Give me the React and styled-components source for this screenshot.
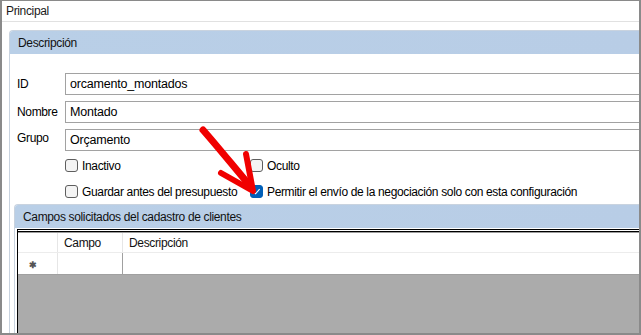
import React from "react";
import styled, { createGlobalStyle } from "styled-components";

const GlobalStyle = createGlobalStyle`
  html, body {
    margin: 0;
    padding: 0;
    background: #ffffff;
  }
  body {
    font-family: "Liberation Sans", Arial, sans-serif;
    font-size: 12px;
    letter-spacing: -0.35px;
    color: #000;
  }
`;

// Janela principal
const Window = styled.div`
  position: relative;
  width: 641px;
  height: 335px;
  box-sizing: border-box;
  border: 2px solid #8a8a8a;
  border-top-width: 1px;
  overflow: hidden;
  display: flex;
  flex-direction: column;
  background: #fff;
`;

const TitleBar = styled.div`
  height: 20px;
  line-height: 21px;
  padding-left: 4px;
  border-bottom: 1px solid #e1e1e1;
  color: #1a1a1a;
  flex-shrink: 0;
`;

const Content = styled.div`
  flex: 1;
  display: flex;
  padding: 8px 0 0 7px;
  min-height: 0;
`;

const Group = styled.section`
  display: flex;
  flex-direction: column;
  flex: 1;
  min-width: 0;
  border: 1px solid #c9d3df;
  border-right: none;
  border-bottom: none;
  border-top-left-radius: 4px;
  background: #fff;
`;

const GroupHeader = styled.div`
  height: 23px;
  line-height: 24px;
  padding-left: 8px;
  background: linear-gradient(90deg, #b9cfe7 0%, #b8cde6 100%);
  border-top-left-radius: 3px;
  color: #111;
  flex-shrink: 0;
`;

const GroupBody = styled.div`
  display: flex;
  flex-direction: column;
  flex: 1;
  min-height: 0;
  padding: 19px 0 0 7px;
`;

const FieldRow = styled.div`
  display: flex;
  align-items: center;
  height: 22px;
  margin-bottom: 6px;
`;

const Label = styled.label`
  width: 48px;
  flex-shrink: 0;
  margin-top: ${(p) => p.$shift || 0}px;
`;

const Input = styled.div`
  flex: 1;
  height: 22px;
  box-sizing: border-box;
  border: 1px solid #a2a2a2;
  border-right: none;
  padding-left: 4px;
  line-height: 21px;
  font-size: 12.5px;
  letter-spacing: -0.2px;
  background: #fff;
`;

const Checks = styled.div`
  display: grid;
  grid-template-columns: 185px 1fr;
  row-gap: 13px;
  margin: 2px 0 0 48px;
`;

const CheckItem = styled.div`
  display: flex;
  align-items: center;
  height: 13px;
  gap: 4px;
  white-space: nowrap;
`;

const Box = styled.span`
  width: 13px;
  height: 13px;
  box-sizing: border-box;
  border-radius: 3px;
  border: 1px solid ${(p) => (p.$checked ? "#005fb8" : "#5e5e5e")};
  background: ${(p) => (p.$checked ? "#005fb8" : "#f4f4f4")};
  display: flex;
  align-items: center;
  justify-content: center;
  flex-shrink: 0;
`;

const SubGroupWrap = styled.div`
  flex: 1;
  display: flex;
  margin: 6px 0 0 -3px;
  min-height: 0;
`;

const GridFrame = styled.div`
  flex: 1;
  display: flex;
  flex-direction: column;
  margin: 1px 0 0 2px;
  border-top: 1px solid #000;
  border-left: 1px solid #000;
  box-shadow: inset 0 1px 0 #fff, inset 0 2px 0 #000, inset 0 3px 0 #9c9c9c;
  padding-top: 3px;
  background: #ababab;
`;

const GridRow = styled.div`
  display: grid;
  grid-template-columns: 40px 65px 1fr;
  height: ${(p) => p.$h}px;
  background: #fff;
  border-bottom: 1px solid ${(p) => p.$line};
`;

const Cell = styled.div`
  display: flex;
  align-items: center;
  padding-left: 6px;
  border-right: 1px solid ${(p) => p.$line || "#e6e6e6"};
  color: #111;
  &:last-child {
    border-right: none;
  }
`;

const RowMark = styled.span`
  font-size: 9px;
  font-weight: bold;
  color: #555;
  margin-left: 5px;
  margin-top: 2px;
`;

const Arrow = styled.svg`
  position: absolute;
  left: 190px;
  top: 120px;
  pointer-events: none;
`;

function Check({ checked, children }) {
  return (
    <CheckItem>
      <Box $checked={checked}>
        {checked && (
          <svg width="9" height="9" viewBox="0 0 9 9">
            <path d="M1.5 4.8 L3.6 6.8 L7.6 2.2" fill="none" stroke="#fff" strokeWidth="1.1" />
          </svg>
        )}
      </Box>
      <span>{children}</span>
    </CheckItem>
  );
}

export default function App() {
  return (
    <>
      <GlobalStyle />
      <Window>
        <TitleBar>Principal</TitleBar>
        <Content>
          <Group>
            <GroupHeader>Descripción</GroupHeader>
            <GroupBody>
              <FieldRow>
                <Label>ID</Label>
                <Input>orcamento_montados</Input>
              </FieldRow>
              <FieldRow>
                <Label>Nombre</Label>
                <Input>Montado</Input>
              </FieldRow>
              <FieldRow>
                <Label $shift={-4}>Grupo</Label>
                <Input>Orçamento</Input>
              </FieldRow>
              <Checks>
                <Check>Inactivo</Check>
                <Check>Oculto</Check>
                <Check>Guardar antes del presupuesto</Check>
                <Check checked>
                  Permitir el envío de la negociación solo con esta configuración
                </Check>
              </Checks>
              <SubGroupWrap>
                <Group>
                  <GroupHeader>Campos solicitados del cadastro de clientes</GroupHeader>
                  <GridFrame>
                    <GridRow $h={19} $line="#ececec">
                      <Cell />
                      <Cell>Campo</Cell>
                      <Cell>Descripción</Cell>
                    </GridRow>
                    <GridRow $h={21} $line="#a0a0a0">
                      <Cell $line="#e6e6e6">
                        <RowMark>✱</RowMark>
                      </Cell>
                      <Cell $line="#a0a0a0" />
                      <Cell />
                    </GridRow>
                  </GridFrame>
                </Group>
              </SubGroupWrap>
            </GroupBody>
          </Group>
        </Content>
        <Arrow width="70" height="80" viewBox="0 0 70 80">
          <g fill="none" stroke="#f00000" strokeLinecap="round" strokeLinejoin="round">
            <path d="M11 9 C 26 26, 42 46, 59 66" strokeWidth="7" />
            <path d="M29 52 L61 70 L54 33" strokeWidth="6" />
          </g>
        </Arrow>
      </Window>
    </>
  );
}
